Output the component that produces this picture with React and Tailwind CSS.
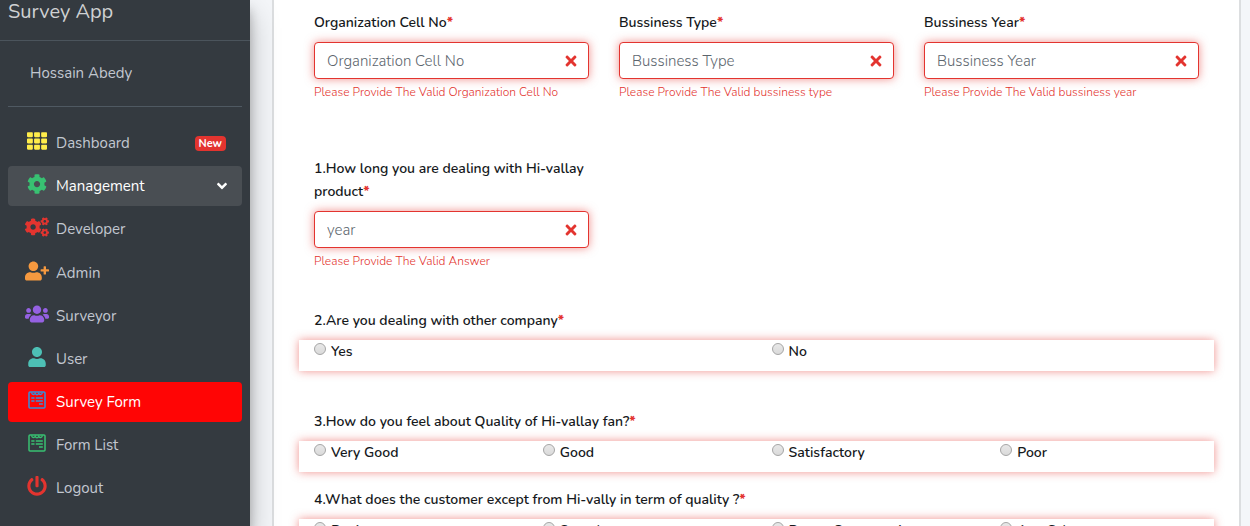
import React from "react";
import { FaTh, FaCog, FaCogs, FaUserPlus, FaUsers, FaUser, FaPowerOff, FaAngleDown, FaTimes } from "react-icons/fa";

function SurveyIcon({ className }) {
  return (
    <svg viewBox="0 0 18 18" width="18" height="18" className={className} fill="none" stroke="currentColor">
      <rect x="1" y="1" width="16" height="16" rx="1" strokeWidth="1.5" />
      <path d="M3.5 1.5Q4 3.5 5.3 3.5T7.2 2.3Q7.8 3.8 9 3.8T10.8 2.3Q11.5 3.5 12.7 3.5T14.5 1.5" strokeWidth="1.3" />
      <path d="M3.3 7h3.2M7.8 7h7M3.3 10h3.2M7.8 10h7M11 13h3.8" strokeWidth="1.5" />
    </svg>
  );
}

const nav = [
  { label: "Dashboard", Icon: FaTh, tone: "text-[#ffed4a]", size: "h-5 w-5", badge: "New" },
  { label: "Management", Icon: FaCog, tone: "text-[#38c172]", size: "h-5 w-5", box: "bg-[#494e53] text-white", open: true },
  { label: "Developer", Icon: FaCogs, tone: "text-[#e3342f]", size: "h-5 w-6", box: "mb-px" },
  { label: "Admin", Icon: FaUserPlus, tone: "text-[#f6993f]", size: "h-5 w-6" },
  { label: "Surveyor", Icon: FaUsers, tone: "text-[#9561e2]", size: "h-5 w-6" },
  { label: "User", Icon: FaUser, tone: "text-[#4dc0b5]", size: "h-5 w-5" },
  { label: "Survey Form", Icon: SurveyIcon, tone: "text-[#3490dc]", size: "", box: "bg-[#ff0505] text-white" },
  { label: "Form List", Icon: SurveyIcon, tone: "text-[#38c172]", size: "" },
  { label: "Logout", Icon: FaPowerOff, tone: "text-[#e3342f]", size: "h-5 w-5" },
];

function Sidebar() {
  return (
    <aside className="z-10 w-[250px] shrink-0 overflow-hidden bg-[#343a40] text-[#c2c7d0] shadow-[0_14px_28px_rgba(0,0,0,0.25),0_10px_10px_rgba(0,0,0,0.22)]">
      <a href="#" className="flex h-[41px] items-start border-b border-[#4b545c] px-2 text-xl leading-6 text-[#cfd1d3]">Survey App</a>
      <div className="mx-2 flex h-[66px] items-center border-b border-[#4f5962] pb-0.5 pl-[22px]">
        <a href="#" className="text-[15px] leading-6">Hossain Abedy</a>
      </div>
      <nav className="mt-4 flex flex-col gap-[3px] px-2">
        {nav.map(({ label, Icon, tone, size, badge, box, open }) => (
          <a key={label} href="#" className={`flex h-10 items-center rounded px-4 text-[15px] leading-6 ${box || ""}`}>
            <span className={`-ml-px mr-1.5 flex w-[27px] justify-center pb-1 ${tone}`}>
              <Icon className={size} />
            </span>
            <span>{label}</span>
            {badge && <span className="ml-auto rounded bg-[#e3342f] px-1 text-[11px] leading-[15px] font-bold text-white">{badge}</span>}
            {open && <FaAngleDown className="-mr-1 ml-auto h-4 w-4" />}
          </a>
        ))}
      </nav>
    </aside>
  );
}

const Star = () => <span className="font-extrabold text-[#e3342f]">*</span>;

function Field({ id, label, placeholder, error }) {
  return (
    <div className="w-1/3 px-[15px]">
      <label htmlFor={id} className="mb-2 block text-sm leading-[23px] font-semibold text-[#16191c]">{label}<Star /></label>
      <div className="relative">
        <input
          id={id}
          type="text"
          placeholder={placeholder}
          className="h-[37px] w-full rounded border border-[#e3342f] bg-white px-3 pr-10 text-[15px] font-light shadow-[0_0_10px_rgba(227,52,47,0.55)] outline-none placeholder:text-[#5c656d]"
        />
        <FaTimes className="absolute top-[11px] right-2.5 h-4 w-4 text-[#e3342f]" />
      </div>
      <p className="mt-1 text-xs leading-[18px] font-light text-[#e3342f]">{error}</p>
    </div>
  );
}

function Choices({ name, title, options, className }) {
  return (
    <fieldset className={className}>
      <legend className="mb-2 px-[15px] text-sm leading-[23px] font-semibold text-[#16191c]">{title}<Star /></legend>
      <div className="flex h-[31px] bg-white shadow-[0_0_10px_rgba(227,52,47,0.55)]">
        {options.map((o) => (
          <label key={o} className="flex flex-1 items-start gap-[5px] px-[15px] text-sm leading-[23px] font-semibold text-[#16191c]">
            <input
              type="radio"
              name={name}
              className="mt-[3px] h-3 w-3 appearance-none rounded-full border border-[#a5a5a5] bg-linear-to-b from-[#e8e8e8] to-[#dadada] checked:border-4 checked:border-[#3490dc]"
            />
            {o}
          </label>
        ))}
      </div>
    </fieldset>
  );
}

export default function App() {
  return (
    <div className="flex h-screen overflow-hidden bg-[#f4f6f9] font-['Nunito','Lato',sans-serif] text-[#212529]">
      <Sidebar />
      <main className="min-w-0 flex-1 pr-[9px] pl-[22px]">
        <form className="h-full overflow-hidden border-x-2 border-[#dcdee0] bg-white px-[25px] pt-[11px]">
          <div className="flex">
            <Field id="cell" label="Organization Cell No" placeholder="Organization Cell No" error="Please Provide The Valid Organization Cell No" />
            <Field id="type" label="Bussiness Type" placeholder="Bussiness Type" error="Please Provide The Valid bussiness type" />
            <Field id="year" label="Bussiness Year" placeholder="Bussiness Year" error="Please Provide The Valid bussiness year" />
          </div>
          <div className="mt-14 flex">
            <Field id="dealing" label="1.How long you are dealing with Hi-vallay product" placeholder="year" error="Please Provide The Valid Answer" />
          </div>
          <Choices className="mt-[39px]" name="q2" title="2.Are you dealing with other company" options={["Yes", "No"]} />
          <Choices className="mt-[39px]" name="q3" title="3.How do you feel about Quality of Hi-vallay fan?" options={["Very Good", "Good", "Satisfactory", "Poor"]} />
          <Choices className="mt-4" name="q4" title="4.What does the customer except from Hi-vally in term of quality ?" options={["Design", "Speed", "Power Consumption", "Any Other"]} />
        </form>
      </main>
    </div>
  );
}
